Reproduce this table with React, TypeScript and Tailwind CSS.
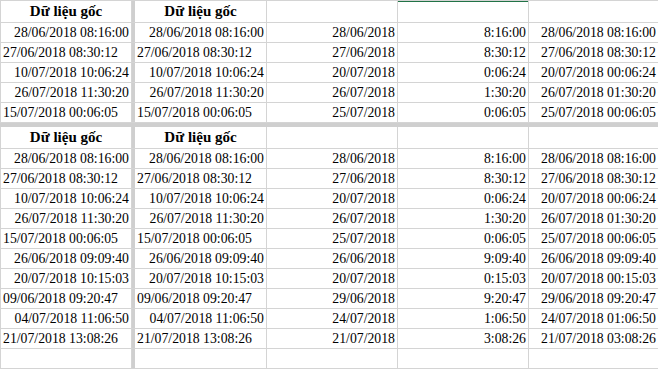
type Row = { a: string; right: boolean; c: string; d: string; e: string };

const top: Row[] = [
  { a: "28/06/2018 08:16:00", right: true, c: "28/06/2018", d: "8:16:00", e: "28/06/2018 08:16:00" },
  { a: "27/06/2018 08:30:12", right: false, c: "27/06/2018", d: "8:30:12", e: "27/06/2018 08:30:12" },
  { a: "10/07/2018 10:06:24", right: true, c: "20/07/2018", d: "0:06:24", e: "20/07/2018 00:06:24" },
  { a: "26/07/2018 11:30:20", right: true, c: "26/07/2018", d: "1:30:20", e: "26/07/2018 01:30:20" },
  { a: "15/07/2018 00:06:05", right: false, c: "25/07/2018", d: "0:06:05", e: "25/07/2018 00:06:05" },
];

const bottom: Row[] = [
  ...top,
  { a: "26/06/2018 09:09:40", right: true, c: "26/06/2018", d: "9:09:40", e: "26/06/2018 09:09:40" },
  { a: "20/07/2018 10:15:03", right: true, c: "20/07/2018", d: "0:15:03", e: "20/07/2018 00:15:03" },
  { a: "09/06/2018 09:20:47", right: false, c: "29/06/2018", d: "9:20:47", e: "29/06/2018 09:20:47" },
  { a: "04/07/2018 11:06:50", right: true, c: "24/07/2018", d: "1:06:50", e: "24/07/2018 01:06:50" },
  { a: "21/07/2018 13:08:26", right: false, c: "21/07/2018", d: "3:08:26", e: "21/07/2018 03:08:26" },
  { a: "", right: false, c: "", d: "", e: "" },
];

const line = "border-[#d4d4d4]";

function DataRow({ r }: { r: Row }) {
  const al = r.right ? "justify-end pr-[2px]" : "justify-start pl-[2px]";
  return (
    <div className={`flex h-[20px] border-b ${line} leading-[19px]`}>
      <div className={`flex w-[132px] border-x ${line} ${al} overflow-hidden whitespace-nowrap`}>{r.a}</div>
      <div className="w-[3px] bg-[#cfcfcf]" />
      <div className={`flex w-[132px] border-r ${line} ${al} overflow-hidden whitespace-nowrap`}>{r.a}</div>
      <div className={`flex w-[131px] border-r ${line} justify-end pr-[2px] whitespace-nowrap`}>{r.c}</div>
      <div className={`flex w-[131px] border-r ${line} justify-end pr-[2px] whitespace-nowrap`}>{r.d}</div>
      <div className={`flex w-[130px] shrink-0 border-r ${line} justify-end pr-[2px] whitespace-nowrap`}>{r.e}</div>
    </div>
  );
}

function Header({ first }: { first: boolean }) {
  const h = first ? "h-[23px] border-t" : "h-[22px]";
  const title = "flex justify-center font-bold text-[15px]";
  return (
    <div className={`flex ${h} border-b ${line} leading-[21px]`}>
      <div className={`${title} w-[132px] border-x ${line}`}>Dữ liệu gốc</div>
      <div className="w-[3px] bg-[#cfcfcf]" />
      <div className={`${title} w-[132px] border-r ${line}`}>Dữ liệu gốc</div>
      <div className={`w-[131px] border-r ${line}`} />
      <div
        className={`w-[131px] border-r ${line} ${first ? "border-t-[#217346] shadow-[inset_0_1px_0_#217346]" : ""}`}
      />
      <div className={`w-[130px] shrink-0 border-r ${line}`} />
    </div>
  );
}

export default function App() {
  return (
    <div className="w-[658px] h-[369px] overflow-hidden bg-white text-black text-[13.75px] [font-family:'Liberation_Serif','Times_New_Roman',serif]">
      <div className="w-[700px]">
        <Header first />
        {top.map((r, i) => (
          <DataRow key={i} r={r} />
        ))}
        <div className="h-[4px] bg-[#cfcfcf]" />
        <Header first={false} />
        {bottom.map((r, i) => (
          <DataRow key={i} r={r} />
        ))}
      </div>
    </div>
  );
}
